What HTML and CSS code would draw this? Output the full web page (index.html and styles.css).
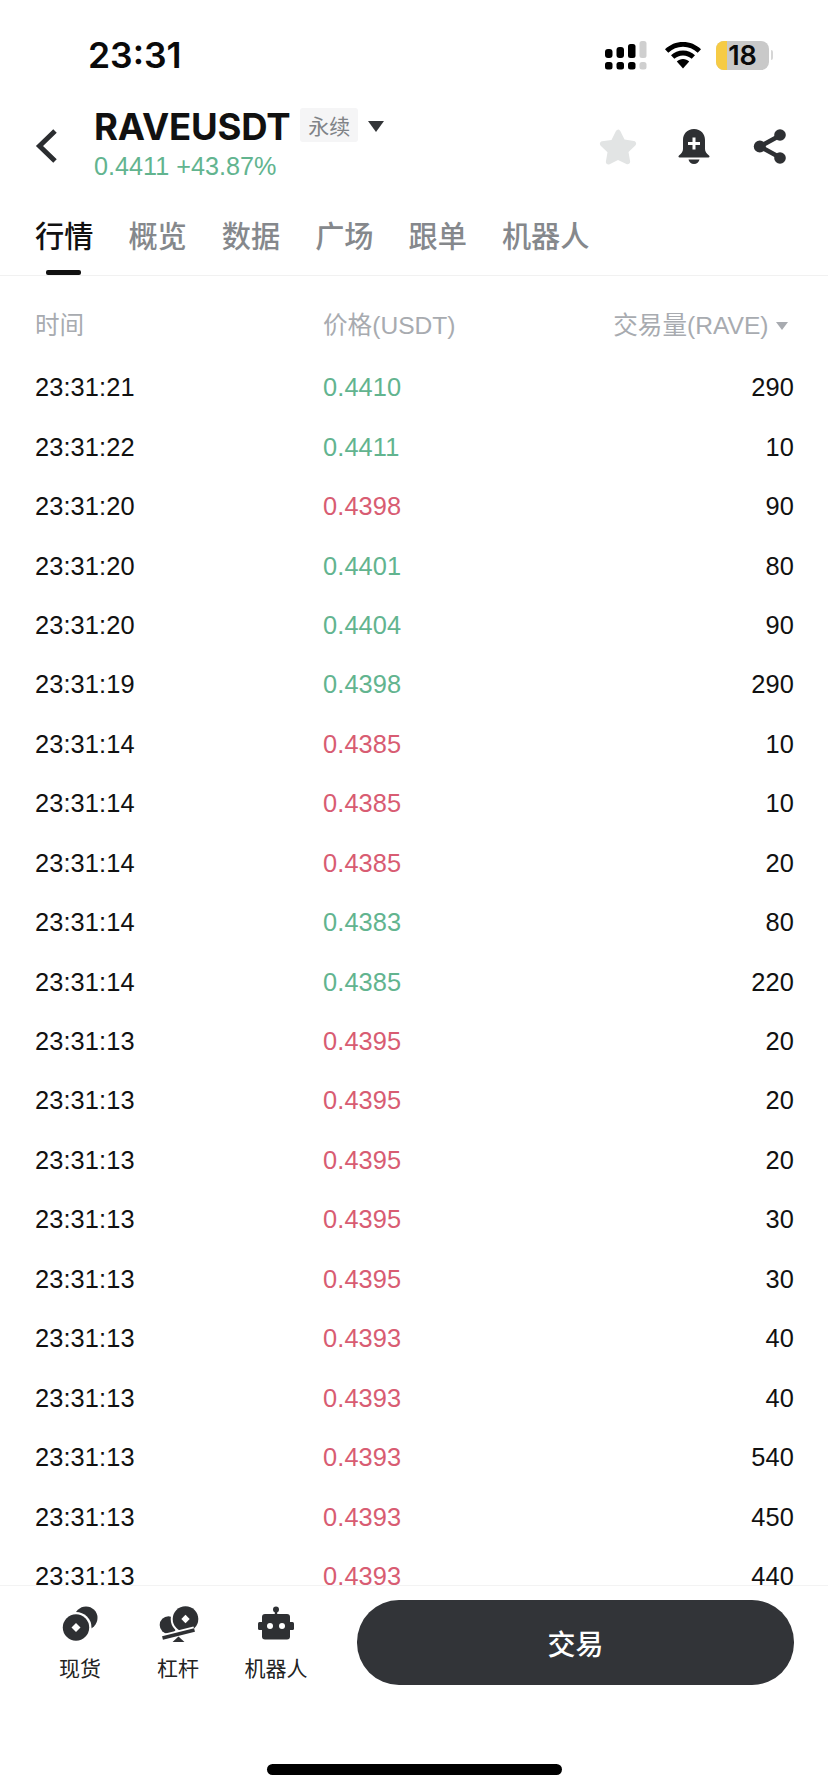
FILE: index.html
```html
<!DOCTYPE html>
<html lang="zh-CN">
<head>
  <meta charset="UTF-8" />
  <meta name="viewport" content="width=device-width, initial-scale=1.0"/>
  <title>RAVEUSDT</title>
  <link rel="stylesheet" href="styles.css">
</head>
<body>

<div class="page">

  <div class="status">
    <span class="clock">23:31</span>
    <div class="status-icons">
      <svg class="signal" width="43" height="30" viewBox="0 0 43 30">
        <rect x="0" y="9" width="7.5" height="9" rx="3" fill="#000"/>
        <rect x="11.5" y="7" width="7.5" height="11" rx="3" fill="#000"/>
        <rect x="23" y="4" width="7.5" height="14" rx="2.5" fill="#000"/>
        <rect x="34.5" y="1" width="7" height="17" rx="2.5" fill="#cfcfcf"/>
        <rect x="0" y="22" width="7.5" height="7.5" rx="2.5" fill="#000"/>
        <rect x="11.5" y="22" width="7.5" height="7.5" rx="2.5" fill="#000"/>
        <rect x="23" y="22" width="7.5" height="7.5" rx="2.5" fill="#000"/>
        <rect x="34.5" y="22" width="7" height="7.5" rx="2.5" fill="#cfcfcf"/>
      </svg>
      <svg class="wifi" width="36" height="27" viewBox="0 0 36 27">
        <path d="M18 0C11 0 5 2.600 0 7.200l3.300 3.500C7.400 7 12.400 4.800 18 4.800s10.600 2.200 14.700 5.900L36 7.200C31 2.600 25 0 18 0z" fill="#000"/>
        <path d="M18 8.600c-4.700 0-8.700 1.700-12 4.700l3.300 3.500c2.300-2.100 5.300-3.400 8.700-3.400s6.400 1.300 8.700 3.400l3.300-3.500c-3.300-3-7.300-4.700-12-4.700z" fill="#000"/>
        <path d="M18 17c-2.400 0-4.600 .9-6.200 2.400L18 26.500l6.200-7.100C22.600 17.900 20.400 17 18 17z" fill="#000"/>
      </svg>
      <div class="battery">
        <div class="battery-body">
          <span class="battery-level"></span>
          <span class="battery-num">18</span>
        </div>
        <span class="battery-nub"></span>
      </div>
    </div>
  </div>

  <div class="header">
    <svg class="back" width="24" height="36" viewBox="0 0 24 36">
      <path d="M20 3L4.500 18 20 33" fill="none" stroke="#2b2d30" stroke-width="5"/>
    </svg>
    <div class="title-block">
      <div class="title-line">
        <span class="symbol">RAVEUSDT</span>
        <span class="tag">永续</span>
        <svg class="caret" width="16" height="11" viewBox="0 0 16 11"><path d="M0 0h16L8 11z" fill="#333538"/></svg>
      </div>
      <div class="quote">0.4411 +43.87%</div>
    </div>
    <div class="header-icons">
      <svg class="star" width="38" height="36" viewBox="0 0 38 36">
        <path d="M19 1.500c1 0 1.800 .6 2.300 1.600l4.200 8.500 9.400 1.400c2.200 .3 3 2.900 1.400 4.400l-6.800 6.600 1.600 9.300c.4 2.200-1.900 3.600-3.700 2.700L19 32l-8.400 4.300c-1.800 .9-4.100-.5-3.700-2.700l1.600-9.300-6.800-6.600c-1.600-1.500-.8-4.100 1.400-4.400l9.400-1.400 4.200-8.500c.5-1 1.300-1.600 2.700-1.600z" fill="#e2e4e4" transform="translate(0 -1)"/>
      </svg>
      <svg class="bell" width="32" height="35" viewBox="0 0 32 35">
        <path d="M16 0C9 0 5 5 5 11v9c0 2.500-1.500 4.500-4 6.500-1 .8-.6 2 .6 2h28.800c1.200 0 1.600-1.200 .6-2-2.500-2-4-4-4-6.500v-9C27 5 23 0 16 0z" fill="#2e3033"/>
        <path d="M10.500 30.500h11C21 33.200 18.800 35 16 35s-5-1.800-5.500-4.500z" fill="#2e3033"/>
        <path d="M14.500 8.500h3v4.500H22v3h-4.500v4.500h-3V16H10v-3h4.500z" fill="#fff"/>
      </svg>
      <svg width="34" height="35" viewBox="0 0 34 35">
        <path d="M27 6.500L7 17.500l20 11" fill="none" stroke="#2e3033" stroke-width="4.500"/>
        <circle cx="27" cy="6" r="5.800" fill="#2e3033"/>
        <circle cx="6.800" cy="17.500" r="6" fill="#2e3033"/>
        <circle cx="27" cy="29" r="5.800" fill="#2e3033"/>
      </svg>
    </div>
  </div>

  <div class="tabs">
    <div class="tab active">行情</div>
    <div class="tab">概览</div>
    <div class="tab">数据</div>
    <div class="tab">广场</div>
    <div class="tab">跟单</div>
    <div class="tab">机器人</div>
  </div>

  <div class="table-head">
    <span>时间</span>
    <span>价格(USDT)</span>
    <span class="num">交易量(RAVE)<i class="sort"></i></span>
  </div>

  <div class="trades">
    <div class="trade"><span>23:31:21</span><span class="up">0.4410</span><span class="num">290</span></div>
    <div class="trade"><span>23:31:22</span><span class="up">0.4411</span><span class="num">10</span></div>
    <div class="trade"><span>23:31:20</span><span class="down">0.4398</span><span class="num">90</span></div>
    <div class="trade"><span>23:31:20</span><span class="up">0.4401</span><span class="num">80</span></div>
    <div class="trade"><span>23:31:20</span><span class="up">0.4404</span><span class="num">90</span></div>
    <div class="trade"><span>23:31:19</span><span class="up">0.4398</span><span class="num">290</span></div>
    <div class="trade"><span>23:31:14</span><span class="down">0.4385</span><span class="num">10</span></div>
    <div class="trade"><span>23:31:14</span><span class="down">0.4385</span><span class="num">10</span></div>
    <div class="trade"><span>23:31:14</span><span class="down">0.4385</span><span class="num">20</span></div>
    <div class="trade"><span>23:31:14</span><span class="up">0.4383</span><span class="num">80</span></div>
    <div class="trade"><span>23:31:14</span><span class="up">0.4385</span><span class="num">220</span></div>
    <div class="trade"><span>23:31:13</span><span class="down">0.4395</span><span class="num">20</span></div>
    <div class="trade"><span>23:31:13</span><span class="down">0.4395</span><span class="num">20</span></div>
    <div class="trade"><span>23:31:13</span><span class="down">0.4395</span><span class="num">20</span></div>
    <div class="trade"><span>23:31:13</span><span class="down">0.4395</span><span class="num">30</span></div>
    <div class="trade"><span>23:31:13</span><span class="down">0.4395</span><span class="num">30</span></div>
    <div class="trade"><span>23:31:13</span><span class="down">0.4393</span><span class="num">40</span></div>
    <div class="trade"><span>23:31:13</span><span class="down">0.4393</span><span class="num">40</span></div>
    <div class="trade"><span>23:31:13</span><span class="down">0.4393</span><span class="num">540</span></div>
    <div class="trade"><span>23:31:13</span><span class="down">0.4393</span><span class="num">450</span></div>
    <div class="trade"><span>23:31:13</span><span class="down">0.4393</span><span class="num">440</span></div>
  </div>

  <div class="footer">
    <div class="actions">
      <div class="tool">
        <svg width="36" height="36" viewBox="0 0 36 36">
          <circle cx="24" cy="12" r="11.500" fill="#2e3033"/>
          <circle cx="14" cy="21.500" r="15.500" fill="#fff"/>
          <circle cx="14" cy="21.500" r="13.200" fill="#2e3033"/>
          <path d="M14 17l4.500 4.500L14 26l-4.500-4.500z" fill="#fff"/>
        </svg>
        <span>现货</span>
      </div>
      <div class="tool">
        <svg width="42" height="36" viewBox="0 0 42 36">
          <circle cx="11.500" cy="19" r="8.800" fill="#2e3033"/>
          <circle cx="28.500" cy="13" r="14.800" fill="#fff"/>
          <circle cx="28.500" cy="13" r="12.800" fill="#2e3033"/>
          <path d="M28.500 8.800l4.200 4.200-4.200 4.200-4.200-4.200z" fill="#fff"/>
          <path d="M5.500 32.500L37.500 24.500" stroke="#fff" stroke-width="8"/>
          <path d="M5.500 32L37.500 24" stroke="#2e3033" stroke-width="3.600"/>
          <path d="M21.500 30.500l6.500 6H15z" fill="#2e3033"/>
        </svg>
        <span>杠杆</span>
      </div>
      <div class="tool">
        <svg width="36" height="36" viewBox="0 0 36 36">
          <circle cx="18" cy="3.500" r="3" fill="#2e3033"/>
          <rect x="16.800" y="4" width="2.400" height="6" fill="#2e3033"/>
          <rect x="4" y="8" width="28" height="25.500" rx="3" fill="#2e3033"/>
          <rect x="0" y="16" width="36" height="8" rx="1.500" fill="#2e3033"/>
          <circle cx="12" cy="20" r="3" fill="#fff"/>
          <circle cx="24" cy="20" r="3" fill="#fff"/>
        </svg>
        <span>机器人</span>
      </div>
      <div class="trade-btn">交易</div>
    </div>
    <div class="home-bar"></div>
  </div>

</div>

</body>
</html>
```

FILE: styles.css
```css
* { box-sizing: border-box; }
body { margin: 0; background: #fff; font-family: "Liberation Sans", "Noto Sans CJK SC", sans-serif; }
.page { width: 828px; height: 1792px; display: flex; flex-direction: column; overflow: hidden; }

.status { height: 110px; display: flex; align-items: center; padding: 0 55px 0 88px; justify-content: space-between; }
.clock { font-family: Inter, sans-serif; font-size: 35.500px; font-weight: 600; color: #0a0a0a; }
.status-icons { display: flex; align-items: center; gap: 16px; }
.signal { margin-right: 1px; }
.battery { display: flex; align-items: center; gap: 2px; margin-left: -1px; }
.battery-body { position: relative; width: 53px; height: 29px; border-radius: 8px; background: #c9c9c9; overflow: hidden; display: flex; align-items: center; justify-content: center; }
.battery-level { position: absolute; left: 0; top: 0; bottom: 0; width: 11px; background: #f6cb45; }
.battery-num { position: relative; font-family: Inter, sans-serif; font-size: 27px; line-height: 27px; font-weight: 600; color: #0a0a0a; }
.battery-nub { width: 2px; height: 10px; border-radius: 0 2px 2px 0; background: #d6d6d6; }

.header { height: 80px; display: flex; padding: 0 41px 0 35px; align-items: flex-start; }
.back { margin: 18px 35px 0 0; flex: none; }
.title-line { display: flex; align-items: center; height: 34px; }
.symbol { font-family: Inter, sans-serif; font-size: 36.500px; font-weight: 700; color: #111; letter-spacing: -0.2px; }
.tag { margin: 0 0 5px 10px; width: 58px; height: 34px; background: #f5f5f6; border-radius: 3px; color: #808387; font-size: 21px; display: flex; align-items: center; justify-content: center; }
.caret { margin: -1px 0 0 10px; }
.quote { margin-top: 8px; color: #62b48f; font-size: 25.200px; line-height: 28px; }
.header-icons { margin-left: auto; margin-top: 19px; display: flex; align-items: flex-start; gap: 43.500px; }
.star { margin-right: -2.500px; }

.tabs { height: 86px; display: flex; gap: 35px; padding: 0 0 0 35px; border-bottom: 1px solid #f1f1f1; }
.tab { position: relative; font-size: 29.200px; line-height: 94px; color: #85888c; height: 85px; font-weight: 500; }
.tab.active { color: #111; }
.tab.active::after { content: ""; position: absolute; left: 11px; bottom: 0; width: 35px; height: 5px; border-radius: 2px; background: #111; }

.table-head { height: 82px; flex: none; display: grid; grid-template-columns: 288px 1fr auto; align-items: center; padding: 11px 34px 0 35px; font-size: 24.600px; color: #a8abb0; }
.num { text-align: right; }
.sort { display: inline-block; margin: 0 0 2px 7px; border: 6.500px solid transparent; border-top: 8px solid #a8abb0; border-bottom: 0; vertical-align: middle; }
.table-head .num { margin-right: 6.500px; }

.trades { flex: 1; overflow: hidden; padding: 0 34px 0 35px; min-height: 0; }
.trade { height: 59.450px; display: grid; grid-template-columns: 288px 1fr auto; align-items: center; font-size: 25.400px; letter-spacing: 0.1px; color: #111; }
.up { color: #62b48f; }
.down { color: #d85c72; }

.footer { height: 207px; flex: none; border-top: 1px solid #f3f3f3; padding-top: 14px; display: flex; flex-direction: column; background: #fff; }
.actions { display: flex; align-items: flex-start; padding-left: 31px; }
.tool { width: 98px; display: flex; flex-direction: column; align-items: center; gap: 13px; padding-top: 6px; font-size: 21px; line-height: 28px; color: #222; }
.trade-btn { margin-left: 32px; width: 437px; height: 85px; border-radius: 42px; background: #323438; color: #fff; font-size: 28px; font-weight: 500; display: flex; align-items: center; justify-content: center; }
.home-bar { width: 295px; height: 11px; border-radius: 6px; background: #000; margin: 79px 0 0 267px; }
```
